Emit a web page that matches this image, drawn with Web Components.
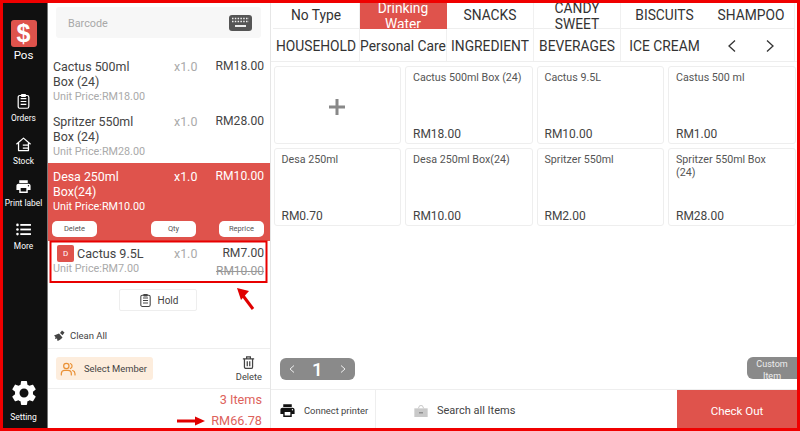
<!DOCTYPE html>
<html>
<head>
<meta charset="utf-8">
<title>Pos</title>
<style>
    html, body { margin: 0; padding: 0; background: #fff; }
    body { font-family: Roboto, "Liberation Sans", sans-serif; }
</style>
</head>
<body>
<pos-app>
    <pos-sidebar slot="side"></pos-sidebar>
    <pos-cart slot="cart">
        <cart-row name="Cactus 500ml Box (24)" unit="Unit Price:RM18.00" price="RM18.00"></cart-row>
        <cart-row name="Spritzer 550ml Box (24)" unit="Unit Price:RM28.00" price="RM28.00"></cart-row>
        <cart-row name="Desa 250ml Box(24)" unit="Unit Price:RM10.00" price="RM10.00" selected></cart-row>
        <cart-row name="Cactus 9.5L" unit="Unit Price:RM7.00" price="RM7.00" old="RM10.00" discount></cart-row>
    </pos-cart>
    <pos-tabs slot="main"></pos-tabs>
    <pos-products slot="main">
        <pos-product add></pos-product>
        <pos-product name="Cactus 500ml Box (24)" price="RM18.00"></pos-product>
        <pos-product name="Cactus 9.5L" price="RM10.00"></pos-product>
        <pos-product name="Castus 500 ml" price="RM1.00"></pos-product>
        <pos-product name="Desa 250ml" price="RM0.70"></pos-product>
        <pos-product name="Desa 250ml Box(24)" price="RM10.00"></pos-product>
        <pos-product name="Spritzer 550ml" price="RM2.00"></pos-product>
        <pos-product name="Spritzer 550ml Box (24)" price="RM28.00"></pos-product>
    </pos-products>
    <pos-pager slot="main"></pos-pager>
    <pos-bottom slot="main"></pos-bottom>
</pos-app>
<script>
const ICONS = {
    print: '<path fill="currentColor" d="M19 8H5c-1.66 0-3 1.34-3 3v6h4v4h12v-4h4v-6c0-1.66-1.34-3-3-3zm-3 11H8v-5h8v5zm3-7c-.55 0-1-.45-1-1s.45-1 1-1 1 .45 1 1-.45 1-1 1zm-1-9H6v4h12V3z"/>',
    gear: '<path fill="currentColor" d="M19.14 12.94c.04-.3.06-.61.06-.94 0-.32-.02-.64-.07-.94l2.03-1.58c.18-.14.23-.41.12-.61l-1.92-3.32c-.12-.22-.37-.29-.59-.22l-2.39.96c-.5-.38-1.03-.7-1.62-.94l-.36-2.54c-.04-.24-.24-.41-.48-.41h-3.84c-.24 0-.43.17-.47.41l-.36 2.54c-.59.24-1.13.57-1.62.94l-2.39-.96c-.22-.08-.47 0-.59.22L2.74 8.87c-.12.21-.08.47.12.61l2.03 1.58c-.05.3-.09.63-.09.94s.02.64.07.94l-2.03 1.58c-.18.14-.23.41-.12.61l1.92 3.32c.12.22.37.29.59.22l2.39-.96c.5.38 1.03.7 1.62.94l.36 2.54c.05.24.24.41.48.41h3.84c.24 0 .44-.17.47-.41l.36-2.54c.59-.24 1.13-.56 1.62-.94l2.39.96c.22.08.47 0 .59-.22l1.92-3.32c.12-.22.07-.47-.12-.61l-2.01-1.58zM12 15.6c-1.98 0-3.6-1.62-3.6-3.6s1.62-3.6 3.6-3.6 3.6 1.62 3.6 3.6-1.62 3.6-3.6 3.6z"/>',
    clip: '<g fill="none" stroke="currentColor" stroke-width="1.7"><rect x="4.5" y="3.5" width="15" height="18" rx="2.5"/><path d="M8 8h8M8 12h8M8 16h8"/></g><rect x="8.5" y="1.5" width="7" height="4" rx="1" fill="currentColor"/>',
    house: '<g fill="none" stroke="currentColor" stroke-width="1.8" stroke-linejoin="round"><path d="M2 11.5 12 3l10 8.5"/><path d="M5 10v10.5h14V10"/><path d="M11 13h8M11 17h8"/></g>',
    list: '<g fill="currentColor"><circle cx="3.5" cy="5.5" r="1.8"/><circle cx="3.5" cy="12" r="1.8"/><circle cx="3.5" cy="18.5" r="1.8"/><rect x="7.5" y="4.2" width="15" height="2.6"/><rect x="7.5" y="10.7" width="15" height="2.6"/><rect x="7.5" y="17.2" width="15" height="2.6"/></g>',
    trash: '<g fill="none" stroke="currentColor" stroke-width="2"><path d="M3 6h18M9 6V3h6v3"/><path d="M5.5 6v13a2.5 2.5 0 0 0 2.5 2.5h8a2.5 2.5 0 0 0 2.5-2.5V6"/><path d="M10 10v8M14 10v8"/></g>',
    broom: '<g fill="currentColor"><path d="M12 7 2 11l3 3-1 4 4-1 1 5c3-1 7-3 10-7z"/><path d="m14 6 4-5 5 4-4 5.500z"/></g>',
    people: '<g fill="none" stroke="currentColor" stroke-width="1.8" stroke-linecap="round"><circle cx="9.500" cy="7.500" r="4"/><path d="M2 21v-2.500A5 5 0 0 1 7 14h5a5 5 0 0 1 5 5v2"/><path d="M15.500 3.800a4 4 0 0 1 0 7.500M19 14.300a5 5 0 0 1 3.500 4.700v2"/></g>',
    bag: '<path fill="#c9c9c9" d="M2 8h20v13H2z"/><path fill="none" stroke="#c9c9c9" stroke-width="1.500" d="M8 8l2-4h4l2 4"/><rect x="9" y="14" width="6" height="1.500" fill="#777"/>'
};

function icon(name, size) {
    return `<svg viewBox="0 0 24 24" width="${size}" height="${size}" aria-hidden="true">${ICONS[name]}</svg>`;
}

class PosApp extends HTMLElement {
    constructor() {
        super();
        this.attachShadow({ mode: 'open' });
    }

    connectedCallback() {
        this.shadowRoot.innerHTML = `
            <style>
                :host {
                    display: block;
                    position: relative;
                    box-sizing: border-box;
                    width: 800px;
                    height: 431px;
                    border: 3px solid #f00000;
                    overflow: hidden;
                    background: #fff;
                }
                .frame {
                    display: grid;
                    grid-template-columns: 45px 222px 1fr;
                    height: 100%;
                }
                .main {
                    display: flex;
                    flex-direction: column;
                    min-width: 0;
                    border-left: 1px solid #e6e6e6;
                }
                svg.marks {
                    position: absolute;
                    left: -3px;
                    top: -3px;
                    pointer-events: none;
                }
            </style>
            <div class="frame">
                <slot name="side"></slot>
                <slot name="cart"></slot>
                <div class="main"><slot name="main"></slot></div>
            </div>
            <svg class="marks" width="800" height="431" aria-hidden="true">
                <rect x="50.500" y="241.500" width="216" height="40.500" fill="none" stroke="#e80000" stroke-width="2"/>
                <path d="M253 309 241 293" stroke="#e00000" stroke-width="3" fill="none"/>
                <path d="M237 288l12 3-8 9z" fill="#e00000"/>
                <path d="M177 421h20" stroke="#e00000" stroke-width="3" fill="none"/>
                <path d="M205 421l-10-4.500v9z" fill="#e00000"/>
            </svg>
        `;
    }
}

class PosSidebar extends HTMLElement {
    constructor() {
        super();
        this.attachShadow({ mode: 'open' });
    }

    connectedCallback() {
        const nav = [['clip', 'Orders'], ['house', 'Stock'], ['print', 'Print label'], ['list', 'More']];
        this.shadowRoot.innerHTML = `
            <style>
                :host {
                    display: flex;
                    flex-direction: column;
                    align-items: center;
                    background: #101010;
                    color: #fff;
                    border-right: 1px solid #777;
                    box-sizing: border-box;
                    height: 425px;
                    padding-right: 3px;
                }
                .logo {
                    box-sizing: border-box;
                    width: 26px;
                    height: 27px;
                    margin-top: 17px;
                    background: #df534c;
                    border-radius: 3px;
                    text-align: center;
                    font: 700 25px/27px "Liberation Sans", sans-serif;
                }
                .pos { font-size: 11.500px; line-height: 15px; margin: 1px 0 30px; }
                .item {
                    display: flex;
                    flex-direction: column;
                    align-items: center;
                    height: 42.500px;
                    font-size: 8.400px;
                    line-height: 12px;
                    white-space: nowrap;
                }
                .item svg { display: block; margin-bottom: 2px; }
                .setting { margin-top: auto; margin-bottom: 5px; display: flex; flex-direction: column; align-items: center; font-size: 8.500px; line-height: 12px; }
                .setting svg { display: block; margin-bottom: 3px; }
            </style>
            <div class="logo">$</div>
            <div class="pos">Pos</div>
            ${nav.map(n => `<div class="item">${icon(n[0], 17)}<span>${n[1]}</span></div>`).join('')}
            <div class="setting">${icon('gear', 30)}<span>Setting</span></div>
        `;
    }
}

class PosCart extends HTMLElement {
    constructor() {
        super();
        this.attachShadow({ mode: 'open' });
    }

    connectedCallback() {
        this.shadowRoot.innerHTML = `
            <style>
                :host {
                    display: flex;
                    flex-direction: column;
                    height: 425px;
                    color: #444;
                    min-width: 0;
                }
                .barcode {
                    display: flex;
                    align-items: center;
                    justify-content: space-between;
                    height: 31px;
                    margin: 4px 9px 15px 8px;
                    padding: 0 9px 0 12px;
                    background: #f7f7f7;
                    border-radius: 3px;
                    color: #a8a8a8;
                    font-size: 10.800px;
                }
                .barcode span { padding-top: 1px; }
                .kbd { display: block; }
                .hold {
                    display: flex;
                    align-items: center;
                    justify-content: center;
                    gap: 5px;
                    box-sizing: border-box;
                    width: 78px;
                    height: 22px;
                    margin: 6px 0 0 71px;
                    border: 1px solid #eee;
                    border-radius: 2px;
                    font-size: 10px;
                }
                .bottom { margin-top: auto; }
                .clean {
                    display: flex;
                    align-items: center;
                    gap: 5px;
                    box-sizing: border-box;
                    height: 28px;
                    padding: 2px 0 0 5px;
                    font-size: 9.500px;
                    border-bottom: 1px solid #eee;
                }
                .member {
                    display: flex;
                    align-items: center;
                    justify-content: space-between;
                    height: 39px;
                    padding: 0 8px 0 8px;
                    border-bottom: 1px solid #eee;
                }
                .select {
                    display: flex;
                    align-items: center;
                    gap: 8px;
                    box-sizing: border-box;
                    width: 97px;
                    height: 23px;
                    padding-left: 4px;
                    background: #fdeddd;
                    border-radius: 3px;
                    font-size: 9.400px;
                    white-space: nowrap;
                }
                .select svg { color: #ea9136; }
                .del {
                    display: flex;
                    flex-direction: column;
                    align-items: center;
                    font-size: 9.300px;
                    line-height: 12px;
                    padding-top: 1px;
                }
                .del svg { display: block; margin-bottom: 1px; }
                .sum {
                    height: 39px;
                    text-align: right;
                    color: #dd625b;
                    font-size: 12.700px;
                    line-height: 21px;
                    padding-right: 8px;
                }
            </style>
            <div class="barcode">
                <span>Barcode</span>
                <svg class="kbd" width="23" height="16" viewBox="0 0 23 16" aria-hidden="true">
                    <rect width="23" height="16" rx="3" fill="#555"/>
                    <path d="M3 3.500h17M3 6.500h17" stroke="#eee" stroke-width="1.500" stroke-dasharray="1.500 1.300"/>
                    <rect x="6" y="10" width="11" height="2" fill="#eee"/>
                </svg>
            </div>
            <slot></slot>
            <div class="hold">${icon('clip', 15)}<span>Hold</span></div>
            <div class="bottom">
                <div class="clean">${icon('broom', 12)}<span>Clean All</span></div>
                <div class="member">
                    <div class="select">${icon('people', 16)}<span>Select Member</span></div>
                    <div class="del">${icon('trash', 15)}<span>Delete</span></div>
                </div>
                <div class="sum">3 Items<br>RM66.78</div>
            </div>
        `;
    }
}

class CartRow extends HTMLElement {
    constructor() {
        super();
        this.attachShadow({ mode: 'open' });
    }

    connectedCallback() {
        const name = this.getAttribute('name');
        const unit = this.getAttribute('unit');
        const price = this.getAttribute('price');
        const old = this.getAttribute('old');
        const selected = this.hasAttribute('selected');
        const discount = this.hasAttribute('discount');
        this.shadowRoot.innerHTML = `
            <style>
                :host {
                    display: block;
                    box-sizing: border-box;
                    padding: 5.500px 6px 0 5px;
                    height: ${selected ? 78 : discount ? 42 : 55}px;
                    background: ${selected ? '#df534c' : '#fff'};
                    color: ${selected ? '#fff' : '#444'};
                    font-size: 12.400px;
                    line-height: 15px;
                }
                .top { display: grid; grid-template-columns: 121px 41px 49px; }
                .name { padding-right: 30px; }
                .qty { color: ${selected ? '#fff' : '#aaa'}; font-size: 12.400px; }
                .price { text-align: right; white-space: nowrap; font-size: 12.100px; }
                .unit { font-size: 10.800px; line-height: 16px; color: ${selected ? '#fff' : '#aaa'}; }
                .actions { display: flex; margin: 6.500px 0 0 -1px; }
                .actions span {
                    box-sizing: border-box;
                    flex: none;
                    width: 45px;
                    height: 16px;
                    background: #fff;
                    color: #555;
                    border-radius: 5px;
                    text-align: center;
                    font-size: 7.500px;
                    line-height: 16px;
                }
                .actions span:nth-child(2) { margin-left: 54px; }
                .actions span:nth-child(3) { margin-left: 23px; }
                .d {
                    flex: none;
                    width: 17px;
                    height: 17px;
                    margin-right: 3px;
                    border-radius: 2px;
                    background: #df534c;
                    color: #fff;
                    text-align: center;
                    font-size: 8px;
                    line-height: 17px;
                }
                .disc {
                    display: flex;
                    align-items: center;
                    margin-left: 4px;
                    padding-right: 0;
                    font-size: 12.600px;
                    white-space: nowrap;
                    line-height: 17px;
                }
                .low { display: flex; justify-content: space-between; margin-top: -1px; }
                .old { color: #999; font-size: 12px; text-decoration: line-through; line-height: 16px; padding-top: 2px; }
                :host([discount]) { padding-top: 4px; }
                :host([discount]) .qty, :host([discount]) .price { line-height: 17px; }
            </style>
            <div class="top">
                <div class="name ${discount ? 'disc' : ''}">${discount ? '<span class="d">D</span>' : ''}${name}</div>
                <div class="qty">x1.0</div>
                <div class="price">${price}</div>
            </div>
            ${old
                ? `<div class="low"><span class="unit">${unit}</span><span class="old">${old}</span></div>`
                : `<div class="unit">${unit}</div>`}
            ${selected ? '<div class="actions"><span>Delete</span><span>Qty</span><span>Reprice</span></div>' : ''}
        `;
    }
}

class PosTabs extends HTMLElement {
    constructor() {
        super();
        this.attachShadow({ mode: 'open' });
    }

    connectedCallback() {
        const rowOne = ['No Type', 'Drinking Water', 'SNACKS', 'CANDY SWEET', 'BISCUITS', 'SHAMPOO'];
        const rowTwo = ['HOUSEHOLD', 'Personal Care', 'INGREDIENT', 'BEVERAGES', 'ICE CREAM'];
        this.shadowRoot.innerHTML = `
            <style>
                :host {
                    display: grid;
                    grid-template-columns: repeat(6, 87px);
                    grid-template-rows: 26px 32px;
                    padding-left: 2px;
                    border-bottom: 1px solid #eee;
                    color: #333;
                    font-size: 13.800px;
                    line-height: 16px;
                    flex: none;
                }
                .t {
                    display: flex;
                    align-items: center;
                    justify-content: center;
                    text-align: center;
                    box-sizing: border-box;
                    border-right: 1px solid #f0f0f0;
                    border-bottom: 1px solid #eee;
                    padding-bottom: 2px;
                }
                .two { padding-bottom: 0; }
                .r2 { white-space: nowrap; border-bottom: 0; padding: 2px 0 0 0; }
                .t:nth-child(6n) { border-right: 0; }
                .on { background: #df534c; color: #fff; border-color: #df534c; overflow: hidden; padding: 0 20px; }
                .arrows { justify-content: space-around; padding: 2px 5px 0 5px; }
                svg { display: block; }
            </style>
            ${rowOne.map((t, i) => `<div class="t ${i === 1 ? 'on' : ''} ${t.includes(' ') && i ? 'two' : ''}">${t === 'CANDY SWEET' ? 'CANDY<br>SWEET' : t}</div>`).join('')}
            ${rowTwo.map(t => `<div class="t r2">${t}</div>`).join('')}
            <div class="t r2 arrows">
                <svg width="10" height="14" viewBox="0 0 10 14" aria-hidden="true"><path d="M8 1.500 2 7l6 5.500" fill="none" stroke="#333" stroke-width="1.300"/></svg>
                <svg width="10" height="14" viewBox="0 0 10 14" aria-hidden="true"><path d="M2 1.500 8 7l-6 5.500" fill="none" stroke="#333" stroke-width="1.300"/></svg>
            </div>
        `;
    }
}

class PosProducts extends HTMLElement {
    constructor() {
        super();
        this.attachShadow({ mode: 'open' });
    }

    connectedCallback() {
        this.shadowRoot.innerHTML = `
            <style>
                :host {
                    display: grid;
                    grid-template-columns: repeat(4, 127.500px);
                    grid-auto-rows: 78px;
                    gap: 4px;
                    padding: 4px 0 0 2.500px;
                    flex: none;
                }
            </style>
            <slot></slot>
        `;
    }
}

class PosProduct extends HTMLElement {
    constructor() {
        super();
        this.attachShadow({ mode: 'open' });
    }

    connectedCallback() {
        const add = this.hasAttribute('add');
        const name = this.getAttribute('name');
        const price = this.getAttribute('price');
        this.shadowRoot.innerHTML = `
            <style>
                :host {
                    display: flex;
                    flex-direction: column;
                    justify-content: space-between;
                    box-sizing: border-box;
                    border: 1px solid #eee;
                    border-radius: 3px;
                    padding: 4px 7px 1px 7px;
                    color: #555;
                    font-size: 10.700px;
                    line-height: 13px;
                }
                .price { font-size: 12px; line-height: 16px; color: #444; }
                .plus { flex: 1; display: flex; align-items: center; justify-content: center; }
                svg { display: block; }
            </style>
            ${add
                ? '<div class="plus"><svg width="18" height="18" viewBox="0 0 18 18" aria-hidden="true"><path d="M9 1v16M1 9h16" stroke="#888" stroke-width="3"/></svg></div>'
                : `<div>${name}</div><div class="price">${price}</div>`}
        `;
    }
}

class PosPager extends HTMLElement {
    constructor() {
        super();
        this.attachShadow({ mode: 'open' });
    }

    connectedCallback() {
        this.shadowRoot.innerHTML = `
            <style>
                :host {
                    display: flex;
                    justify-content: space-between;
                    align-items: flex-start;
                    margin-top: auto;
                    height: 31px;
                    padding-left: 9px;
                    flex: none;
                }
                .pager {
                    display: flex;
                    align-items: center;
                    justify-content: space-between;
                    box-sizing: border-box;
                    width: 75px;
                    height: 22px;
                    padding: 0 9px;
                    background: #8a8a8a;
                    border-radius: 6px;
                    color: #fff;
                    font-weight: 500;
                    font-size: 19px;
                }
                .custom {
                    box-sizing: border-box;
                    width: 50px;
                    height: 22px;
                    margin-top: -1px;
                    overflow: hidden;
                    background: #8a8a8a;
                    border-radius: 6px 0 0 6px;
                    color: #eee;
                    text-align: center;
                    font-size: 9px;
                    line-height: 12px;
                    padding: 1px 2px 0 2px;
                }
                svg { display: block; }
            </style>
            <div class="pager">
                <svg width="6" height="8" viewBox="0 0 6 8" aria-hidden="true"><path d="M5 .5 1 4l4 3.500" fill="none" stroke="#eee"/></svg>
                <span>1</span>
                <svg width="6" height="8" viewBox="0 0 6 8" aria-hidden="true"><path d="M1 .5 5 4 1 7.500" fill="none" stroke="#eee"/></svg>
            </div>
            <div class="custom">Custom Item</div>
        `;
    }
}

class PosBottom extends HTMLElement {
    constructor() {
        super();
        this.attachShadow({ mode: 'open' });
    }

    connectedCallback() {
        this.shadowRoot.innerHTML = `
            <style>
                :host {
                    display: flex;
                    height: 38px;
                    flex: none;
                    border-top: 1px solid #eee;
                    color: #444;
                }
                .printer {
                    display: flex;
                    align-items: center;
                    gap: 8px;
                    box-sizing: border-box;
                    width: 105px;
                    padding: 3px 0 0 8px;
                    border-right: 1px solid #eee;
                    font-size: 9.400px;
                    white-space: nowrap;
                }
                .printer svg { color: #111; }
                .search {
                    flex: 1;
                    display: flex;
                    align-items: center;
                    gap: 8px;
                    padding: 3px 0 0 37px;
                    font-size: 11px;
                }
                .check {
                    box-sizing: border-box;
                    width: 120px;
                    padding-top: 4px;
                    background: #df534c;
                    color: #fff;
                    display: flex;
                    align-items: center;
                    justify-content: center;
                    font-size: 11.500px;
                }
                svg { display: block; }
            </style>
            <div class="printer">${icon('print', 17)}<span>Connect printer</span></div>
            <div class="search">${icon('bag', 16)}<span>Search all Items</span></div>
            <div class="check">Check Out</div>
        `;
    }
}

customElements.define('pos-app', PosApp);
customElements.define('pos-sidebar', PosSidebar);
customElements.define('pos-cart', PosCart);
customElements.define('cart-row', CartRow);
customElements.define('pos-tabs', PosTabs);
customElements.define('pos-products', PosProducts);
customElements.define('pos-product', PosProduct);
customElements.define('pos-pager', PosPager);
customElements.define('pos-bottom', PosBottom);
</script>
</body>
</html>
